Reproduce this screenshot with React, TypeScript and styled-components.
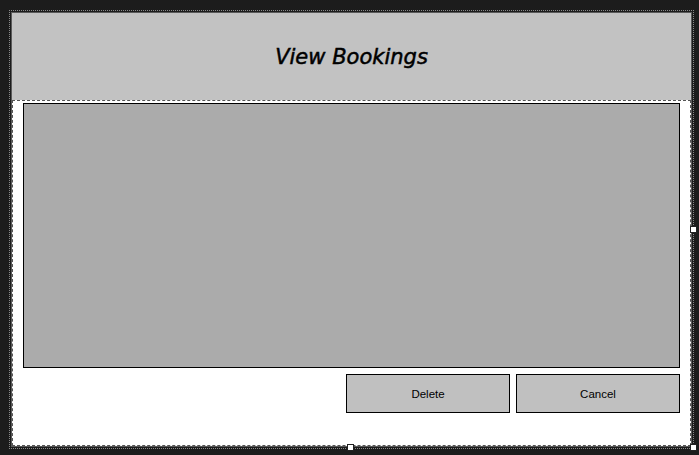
import React from "react";
import styled, { createGlobalStyle } from "styled-components";

const Global = createGlobalStyle`
  html, body { margin: 0; padding: 0; background: #1c1c1c; }
  body { width: 699px; height: 455px; overflow: hidden; font-family: "Liberation Sans", Arial, sans-serif; }
`;

const Canvas = styled.div`
  width: 699px;
  height: 455px;
  box-sizing: border-box;
  padding: 10px 0 0 9px;
  background: #1c1c1c;
`;

const Selection = styled.div`
  position: relative;
  width: 685px;
  height: 439px;
  box-sizing: border-box;
  border: 1px dotted #8a8a8a;
  padding: 1px;
`;

const Form = styled.div`
  width: 100%;
  height: 100%;
  box-sizing: border-box;
  border: 1px solid #5a5a5a;
  background: #ffffff;
  display: flex;
  flex-direction: column;
`;

const Header = styled.div`
  height: 87px;
  flex: none;
  background: #c2c2c2;
  display: flex;
  align-items: center;
  justify-content: center;
`;

const Title = styled.h1`
  margin: 0;
  padding-top: 1px;
  font-family: "DejaVu Sans", sans-serif;
  font-style: italic;
  font-weight: normal;
  font-size: 21px;
  letter-spacing: 0px;
  color: #000;
  -webkit-text-stroke: 0.5px #000;
`;

const Body = styled.div`
  height: 346px;
  box-sizing: border-box;
  border: 1px dashed #555;
  background: #fff;
  padding: 2px 10px 0 10px;
  display: flex;
  flex-direction: column;
  gap: 6px;
`;

const Grid = styled.div`
  height: 265px;
  box-sizing: border-box;
  border: 1px solid #000;
  background: #ababab;
`;

const ButtonRow = styled.div`
  display: flex;
  justify-content: flex-end;
  gap: 6px;
`;

const Button = styled.button`
  width: 164px;
  height: 39px;
  box-sizing: border-box;
  border: 1px solid #000;
  background: #c0c0c0;
  font-family: "Liberation Sans", Arial, sans-serif;
  font-size: 11.5px;
  color: #000;
  padding: 0;
  padding-top: 1px;
`;

const Handle = styled.div<{ $x: number; $y: number }>`
  position: absolute;
  left: ${(p) => p.$x}px;
  top: ${(p) => p.$y}px;
  width: 5px;
  height: 5px;
  background: #fff;
  border: 1px solid #222;
`;

export default function App() {
  return (
    <>
      <Global />
      <Canvas>
        <Selection>
          <Form>
            <Header>
              <Title>View Bookings</Title>
            </Header>
            <Body>
              <Grid />
              <ButtonRow>
                <Button>Delete</Button>
                <Button>Cancel</Button>
              </ButtonRow>
            </Body>
          </Form>
          <Handle $x={337} $y={433} />
          <Handle $x={680} $y={433} />
          <Handle $x={680} $y={215} />
        </Selection>
      </Canvas>
    </>
  );
}
